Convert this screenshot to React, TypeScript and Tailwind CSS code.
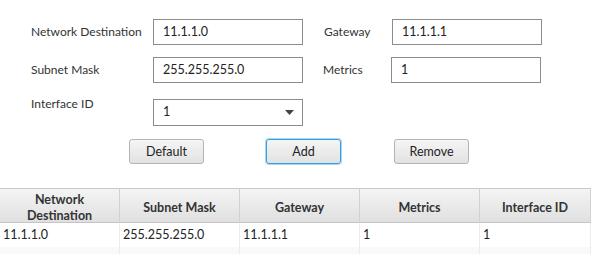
import React from 'react';

const font = { fontFamily: 'Lato, "Liberation Sans", sans-serif' };

interface FieldProps {
  value: string;
  className?: string;
}

const Field: React.FC<FieldProps> = ({ value, className = '' }) => (
  <div
    className={`h-[26px] w-[150px] border border-[#8c8c8c] bg-white pl-[9px] flex items-center text-[12.5px] text-[#222] ${className}`}
  >
    {value}
  </div>
);

const Btn: React.FC<{ label: string; focused?: boolean; className?: string }> = ({ label, focused, className = '' }) => (
  <button
    className={`h-[25px] w-[75px] pt-[2px] rounded-[3px] border text-[12.5px] text-[#222] bg-gradient-to-b from-[#f5f5f5] to-[#e2e2e2] ${
      focused ? 'border-[#3aa0dc] shadow-[0_0_0_1px_#a9d7f2]' : 'border-[#b4b4b4]'
    } ${className}`}
  >
    {label}
  </button>
);

const columns = ['Network\nDestination', 'Subnet Mask', 'Gateway', 'Metrics', 'Interface ID'];
const rows = [['11.1.1.0', '255.255.255.0', '11.1.1.1', '1', '1']];

export default function App() {
  return (
    <div className="w-[591px] h-[254px] bg-white overflow-hidden text-[#333]" style={font}>
      {/* Form */}
      <div className="pt-[19px] pl-[31px]">
        <div className="flex items-center">
          <span className="w-[122px] text-[12px]">Network Destination</span>
          <Field value="11.1.1.0" />
          <span className="ml-[21px] w-[68px] text-[12px]">Gateway</span>
          <Field value="11.1.1.1" />
        </div>
        <div className="flex items-center mt-[12px]">
          <span className="w-[122px] text-[12px]">Subnet Mask</span>
          <Field value="255.255.255.0" />
          <span className="ml-[20px] w-[68px] text-[12px]">Metrics</span>
          <Field value="1" />
        </div>
        <div className="flex items-start mt-[14px]">
          <span className="w-[122px] text-[12px] leading-[16px] mt-[-1px]">Interface ID</span>
          <div className="mt-[2px] h-[27px] w-[150px] border border-[#8c8c8c] bg-white pl-[9px] pr-[8px] flex items-center justify-between text-[12.5px] text-[#222]">
            <span>1</span>
            <svg width="9" height="5" viewBox="0 0 9 5">
              <path d="M0 0h9L4.5 5z" fill="#444" />
            </svg>
          </div>
        </div>
        <div className="flex mt-[13px]">
          <Btn label="Default" className="ml-[98px]" />
          <Btn label="Add" focused className="ml-[62px]" />
          <Btn label="Remove" className="ml-[53px]" />
        </div>
      </div>

      {/* Table */}
      <div className="mt-[24px] border-t border-[#c8c8c8]">
        <div className="grid grid-cols-[120px_120px_120px_120px_111px] h-[34px] bg-gradient-to-b from-[#f4f4f4] to-[#e0e0e0] border-b border-[#c4c4c4]">
          {columns.map((c, i) => (
            <div
              key={i}
              className="flex items-center justify-center pt-[3px] text-center whitespace-pre-line text-[12.5px] leading-[16px] font-bold text-[#333] border-r border-[#d2d2d2]"
            >
              {c}
            </div>
          ))}
        </div>
        {rows.map((r, i) => (
          <div key={i} className="grid grid-cols-[120px_120px_120px_120px_111px] h-[24px]">
            {r.map((v, j) => (
              <div key={j} className="flex items-center pl-[3px] pt-[1px] text-[12.5px] text-[#222] border-r border-[#ececec]">
                {v}
              </div>
            ))}
          </div>
        ))}
        <div className="grid grid-cols-[120px_120px_120px_120px_111px] h-[24px] bg-[#f9f9f9]">
          {columns.map((_, j) => (
            <div key={j} className="border-r border-[#ececec]" />
          ))}
        </div>
      </div>
    </div>
  );
}
